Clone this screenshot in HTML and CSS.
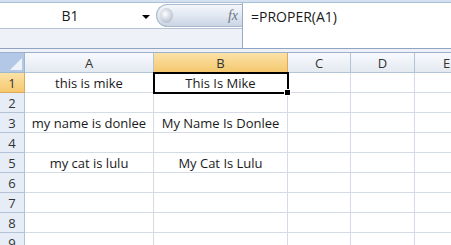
FILE: index.html
```html
<!DOCTYPE html>
<html lang="en">
<head>
    <meta charset="UTF-8">
    <title>PROPER</title>
    <link rel="stylesheet" href="styles.css">
</head>
<body>

    <div class="top-strip"></div>

    <div class="formula-bar">
        <div class="left-part">
            <div class="name-row">
                <div class="name-box">
                    <span class="name-text">B1</span>
                    <span class="drop-arrow"></span>
                </div>
                <div class="fx-button">
                    <span class="knob"></span>
                    <span class="fx">fx</span>
                </div>
            </div>
        </div>
        <div class="formula-input">=PROPER(A1)</div>
    </div>

    <div class="gap-strip"></div>

    <div class="sheet">
        <div class="corner"><span class="corner-tri"></span></div>
        <div class="col-head">A</div>
        <div class="col-head active">B</div>
        <div class="col-head">C</div>
        <div class="col-head">D</div>
        <div class="col-head">E</div>

        <div class="row-head active">1</div>
        <div class="cell">this is mike</div>
        <div class="cell selected">This Is Mike<span class="handle"></span></div>
        <div class="cell"></div><div class="cell"></div><div class="cell"></div>

        <div class="row-head">2</div>
        <div class="cell"></div><div class="cell"></div><div class="cell"></div><div class="cell"></div><div class="cell"></div>

        <div class="row-head">3</div>
        <div class="cell">my name is donlee</div>
        <div class="cell">My Name Is Donlee</div>
        <div class="cell"></div><div class="cell"></div><div class="cell"></div>

        <div class="row-head">4</div>
        <div class="cell"></div><div class="cell"></div><div class="cell"></div><div class="cell"></div><div class="cell"></div>

        <div class="row-head">5</div>
        <div class="cell">my cat is lulu</div>
        <div class="cell">My Cat Is Lulu</div>
        <div class="cell"></div><div class="cell"></div><div class="cell"></div>

        <div class="row-head">6</div>
        <div class="cell"></div><div class="cell"></div><div class="cell"></div><div class="cell"></div><div class="cell"></div>

        <div class="row-head">7</div>
        <div class="cell"></div><div class="cell"></div><div class="cell"></div><div class="cell"></div><div class="cell"></div>

        <div class="row-head">8</div>
        <div class="cell"></div><div class="cell"></div><div class="cell"></div><div class="cell"></div><div class="cell"></div>

        <div class="row-head">9</div>
        <div class="cell"></div><div class="cell"></div><div class="cell"></div><div class="cell"></div><div class="cell"></div>
    </div>

</body>
</html>
```

FILE: styles.css
```css
/* General */
body {
    margin: 0;
    width: 451px;
    height: 245px;
    overflow: hidden;
    background: #ffffff;
    font-family: 'Open Sans', 'Liberation Sans', sans-serif;
    font-size: 13px;
    color: #1a1a1a;
}

/* Formula Bar */
.top-strip {
    height: 2px;
    background: #d5e1f1;
    border-bottom: 1px solid #a9bfd9;
}

.formula-bar {
    display: flex;
    height: 45px;
    background: #eef2f8;
    border-bottom: 1px solid #8ea4c0;
}

.left-part {
    width: 242px;
}

.name-row {
    display: flex;
    height: 25px;
    border-bottom: 1px solid #b6c3d4;
    background: #ffffff;
}

.name-box {
    width: 156px;
    position: relative;
    display: flex;
    align-items: center;
    justify-content: center;
}

.name-text {
    font-size: 14px;
    margin-right: 16px;
}

.drop-arrow {
    position: absolute;
    right: 6px;
    top: 12px;
    border-left: 4px solid transparent;
    border-right: 4px solid transparent;
    border-top: 4px solid #000;
}

.fx-button {
    flex: 1;
    margin: 1px 0;
    border-radius: 12px 0 0 12px;
    border: 1px solid #aab8cb;
    border-right: none;
    background: linear-gradient(#f4f7fb, #dfe6f0 55%, #c9d4e4);
    display: flex;
    align-items: center;
    justify-content: space-between;
    padding: 0 4px 0 3px;
}

.knob {
    width: 13px;
    height: 15px;
    border-radius: 50%;
    background: radial-gradient(circle at 40% 40%, #ffffff, #c4ccd8 60%, #a5b0c0);
}

.fx {
    font-family: 'Liberation Serif', serif;
    font-style: italic;
    font-size: 14px;
    color: #6b7585;
}

.formula-input {
    flex: 1;
    background: #ffffff;
    border-left: 1px solid #9aabc2;
    padding: 4px 0 0 8px;
    font-size: 14px;
}

.gap-strip {
    height: 3px;
    background: #eef2f8;
    border-bottom: 1px solid #9bb0cb;
}

/* Sheet Grid */
.sheet {
    display: grid;
    grid-template-columns: 25px 129px 134px 63px 64px 64px;
    grid-auto-rows: 20px;
}

.sheet > div {
    border-right: 1px solid #d4dae6;
    border-bottom: 1px solid #d4dae6;
    box-sizing: border-box;
    display: flex;
    align-items: center;
    justify-content: center;
}

.corner {
    position: relative;
    background: #b3c8e6;
    border-color: #9eb6ce !important;
}

.corner-tri {
    position: absolute;
    right: 2px;
    bottom: 2px;
    border-left: 12px solid transparent;
    border-bottom: 12px solid #eef3fa;
}

.col-head {
    background: linear-gradient(#f8fafd, #e4e9f1);
    border-color: #b4c2d5 !important;
    color: #333;
}

.row-head {
    background: #e6edf7;
    border-color: #b4c2d5 !important;
    color: #333;
}

.col-head.active,
.row-head.active {
    background: linear-gradient(#fbe2a8, #f5c86f);
    border-color: #e0a95a !important;
}

.cell {
    white-space: nowrap;
}

.selected {
    position: relative;
    outline: 2px solid #000;
    outline-offset: -1px;
    z-index: 1;
}

.handle {
    position: absolute;
    right: -4px;
    bottom: -4px;
    width: 5px;
    height: 5px;
    background: #000;
    border: 1px solid #fff;
}
```
